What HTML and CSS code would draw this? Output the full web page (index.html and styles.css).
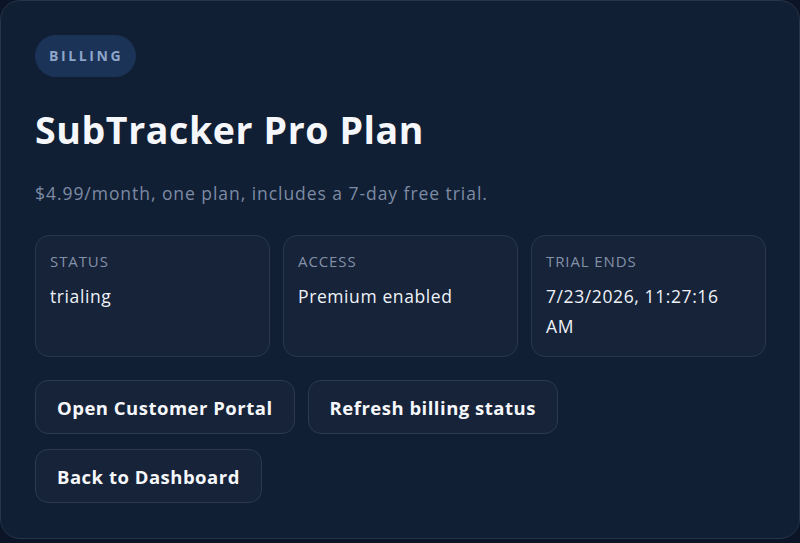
FILE: index.html
```html
<!DOCTYPE html>
<html lang="en">
<head>
<meta charset="utf-8">
<title>Billing</title>
<link rel="stylesheet" href="styles.css">
</head>
<body>
<main class="card">
  <span class="badge">BILLING</span>
  <h1 class="title">SubTracker Pro Plan</h1>
  <p class="subtitle">$4.99/month, one plan, includes a 7-day free trial.</p>
  <section class="stats">
    <div class="stat">
      <div class="stat-label">STATUS</div>
      <div class="stat-value">trialing</div>
    </div>
    <div class="stat">
      <div class="stat-label">ACCESS</div>
      <div class="stat-value">Premium enabled</div>
    </div>
    <div class="stat">
      <div class="stat-label">TRIAL ENDS</div>
      <div class="stat-value">7/23/2026, 11:27:16 AM</div>
    </div>
  </section>
  <div class="actions">
    <button class="btn" type="button">Open Customer Portal</button>
    <button class="btn" type="button">Refresh billing status</button>
  </div>
  <div class="actions">
    <button class="btn" type="button">Back to Dashboard</button>
  </div>
</main>
</body>
</html>
```
FILE: styles.css
```css
* { box-sizing: border-box; }

html, body {
  margin: 0;
  height: 100%;
}

body {
  background: #0b1527;
  font-family: "Open Sans", Lato, "Liberation Sans", sans-serif;
  color: #f3f6fb;
}

.card {
  width: 800px;
  height: 539px;
  background: #111f35;
  border: 1px solid #26344b;
  border-radius: 20px;
  padding: 34px 33px 0 34px;
}

.badge {
  display: inline-block;
  height: 42px;
  line-height: 42px;
  padding: 0 13px 0 14px;
  border-radius: 21px;
  background: #1c3358;
  color: #8ea5c9;
  font-size: 14px;
  font-weight: 700;
  letter-spacing: 2.6px;
}

.title {
  margin: 30px 0 0;
  font-size: 37.5px;
  line-height: 46px;
  font-weight: 700;
  color: #f5f7fb;
  letter-spacing: 0.6px;
}

.subtitle {
  margin: 27px 0 0;
  font-size: 17.5px;
  line-height: 26px;
  color: #7d8ba3;
  letter-spacing: 0.95px;
}

.stats {
  display: grid;
  grid-template-columns: repeat(3, 1fr);
  gap: 13px;
  margin-top: 29px;
}

.stat {
  height: 122px;
  background: #172338;
  border: 1px solid #2a374d;
  border-radius: 14px;
  padding: 15px 16px 15px 14px;
}

.stat-label {
  font-size: 15px;
  line-height: 20px;
  color: #8391a8;
  letter-spacing: 0.9px;
}

.stat-value {
  margin-top: 10px;
  font-size: 17.5px;
  line-height: 30px;
  color: #eef2f8;
  letter-spacing: 0.6px;
}

.actions {
  display: flex;
  gap: 13px;
  margin-top: 23px;
}

.actions + .actions {
  margin-top: 15px;
}

.btn {
  height: 54px;
  padding: 0 21px;
  background: #172338;
  border: 1px solid #2c3a51;
  border-radius: 13px;
  color: #f5f7fb;
  font-family: inherit;
  font-size: 18.5px;
  font-weight: 700;
  letter-spacing: 0.5px;
}
```
